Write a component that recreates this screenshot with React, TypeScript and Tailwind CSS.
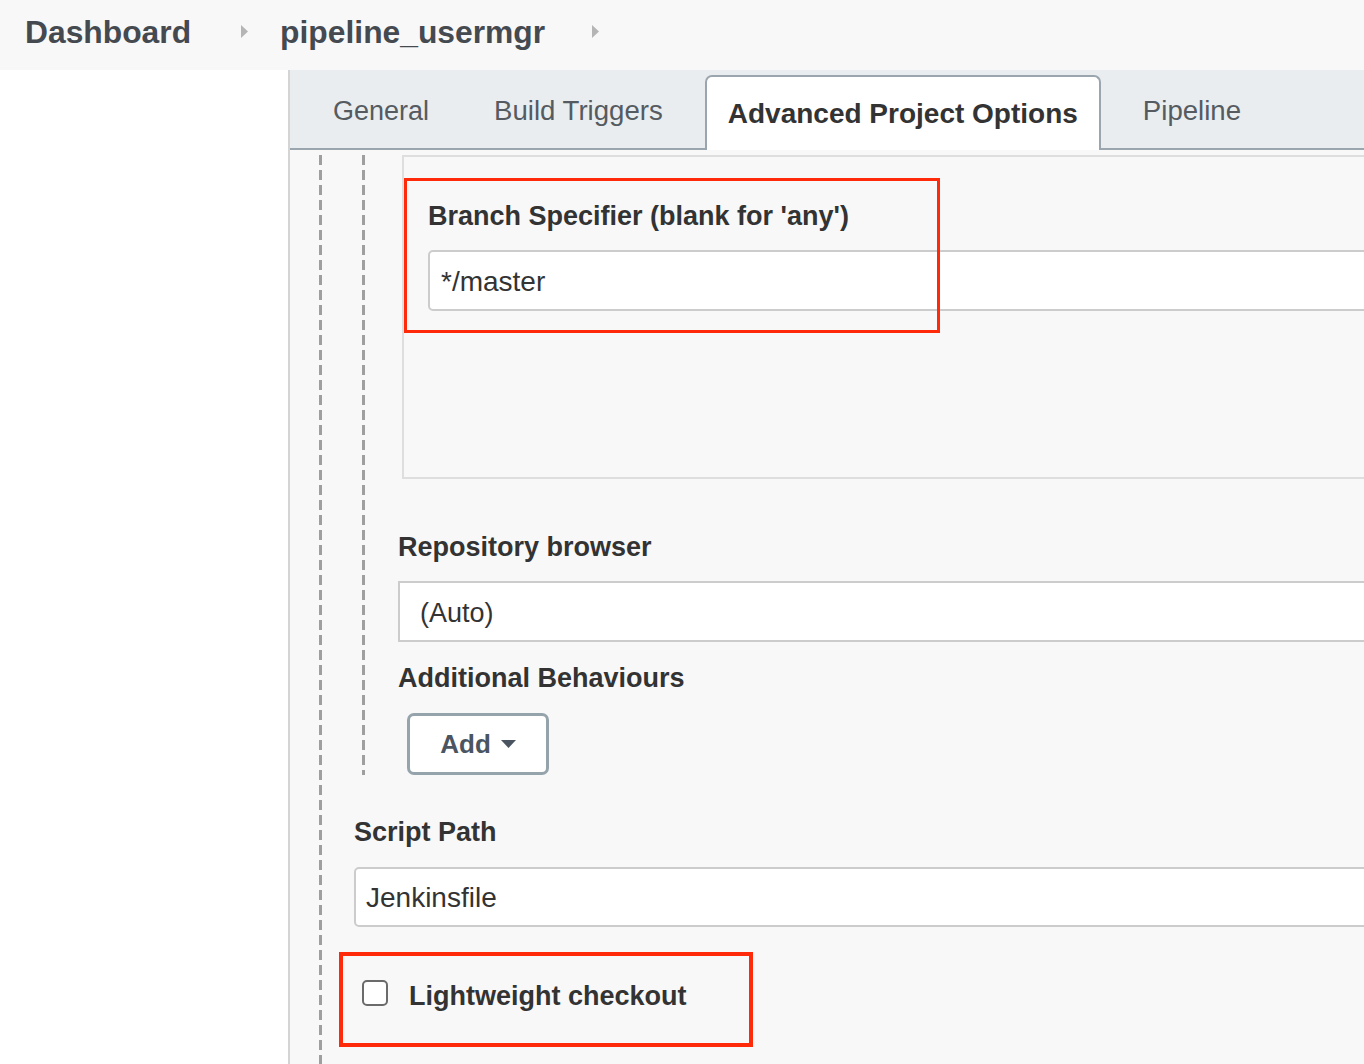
import React from "react";

const dashed =
  "w-[3px] self-stretch bg-[repeating-linear-gradient(to_bottom,#9f9f9f_0px,#9f9f9f_10px,transparent_10px,transparent_15px)]";

function Chevron() {
  return (
    <svg width="7" height="13" viewBox="0 0 7 13" className="shrink-0">
      <polygon points="0,0 7,6.5 0,13" fill="#b5b5b5" />
    </svg>
  );
}

const label = "pt-[2px] text-[27px] leading-[31px] font-bold text-[#333]";

export default function App() {
  return (
    <div className="w-[1364px] h-[1064px] overflow-hidden bg-[#f8f8f8] font-['Liberation_Sans',Arial,sans-serif] text-[#333]">
      {/* Breadcrumb */}
      <div className="h-[70px] flex items-center pb-[8px] bg-[#f8f8f8]">
        <span className="ml-[25px] pt-[1px] text-[31.8px] leading-[36px] font-bold text-[#454a50]">Dashboard</span>
        <span className="ml-[50px] flex items-center"><Chevron /></span>
        <span className="ml-[32px] pt-[1px] text-[31.8px] leading-[36px] font-bold text-[#454a50]">pipeline_usermgr</span>
        <span className="ml-[47px] flex items-center"><Chevron /></span>
      </div>

      <div className="flex h-[994px]">
        {/* Sidebar */}
        <div className="w-[290px] shrink-0 bg-white border-r-2 border-[#d4d4d4]" />

        {/* Main */}
        <div className="flex-1 flex flex-col overflow-hidden bg-[#f8f8f8]">
          {/* Tabs */}
          <div className="h-[80px] shrink-0 bg-[#e9edf0] border-b-2 border-[#9aa5ad] flex items-end">
            <div className="self-center ml-[43px] pt-[3px] text-[27px] leading-[32px] text-[#555b61]">General</div>
            <div className="self-center ml-[65px] pt-[3px] text-[27.6px] leading-[32px] text-[#555b61]">Build Triggers</div>
            <div className="ml-[42px] h-[75px] mb-[-2px] px-[21px] bg-white border-2 border-b-0 border-[#9aa5ad] rounded-t-[7px] flex items-center">
              <span className="text-[28px] leading-[32px] font-bold text-[#333]">Advanced Project Options</span>
            </div>
            <div className="self-center ml-[42px] pt-[3px] text-[27.6px] leading-[32px] text-[#555b61]">Pipeline</div>
          </div>

          {/* Content */}
          <div className="flex-1 flex pl-[29px] pt-[5px]">
            <div className={dashed} />
            <div className="ml-[32px] mr-[-60px] flex-1 flex flex-col">
              {/* nested git section */}
              <div className="flex ml-[8px]">
                <div className={dashed} />
                <div className="ml-[33px] flex-1 flex flex-col">
                  {/* Branch box */}
                  <div className="relative ml-[4px] h-[324px] border-2 border-[#dedede] pt-[42px] pl-[24px]">
                    <div className={label}>Branch Specifier (blank for 'any')</div>
                    <div className="mt-[18px] h-[61px] bg-white border-2 border-[#cccccc] rounded-[5px] pl-[11px] pt-[3px] flex items-center text-[28px] text-[#333]">
                      */master
                    </div>
                    <div className="absolute left-0 top-[21px] w-[536px] h-[155px] border-[3px] border-[#ff2a0a]" />
                  </div>

                  <div className={"mt-[51px] " + label}>Repository browser</div>
                  <div className="mt-[18px] h-[61px] bg-white border-2 border-[#cccccc] pl-[20px] pt-[3px] flex items-center text-[27px] text-[#333]">
                    (Auto)
                  </div>

                  <div className={"mt-[19px] " + label}>Additional Behaviours</div>
                  <div className="mt-[19px] ml-[9px] w-[142px] h-[62px] bg-white border-[3px] border-[#95a3ab] rounded-[7px] flex items-center justify-center gap-[10px]">
                    <span className="text-[26px] font-bold text-[#4b5561]">Add</span>
                    <svg width="15" height="8" viewBox="0 0 15 8">
                      <polygon points="0,0 15,0 7.5,8" fill="#4b5561" />
                    </svg>
                  </div>
                </div>
              </div>

              <div className={"mt-[40px] " + label}>Script Path</div>
              <div className="mt-[19px] h-[60px] bg-white border-2 border-[#cccccc] rounded-[5px] pl-[10px] pt-[1px] flex items-center text-[28px] text-[#333]">
                Jenkinsfile
              </div>

              <div className="relative mt-[53px] ml-[8px] flex items-start">
                <div className="w-[26px] h-[26px] bg-white border-2 border-[#6b6b6b] rounded-[5px]" />
                <span className="ml-[21px] mt-[1px] text-[27px] leading-[31px] font-bold text-[#333]">Lightweight checkout</span>
                <div className="absolute left-[-23px] top-[-28px] w-[414px] h-[95px] border-[4px] border-[#ff2a0a]" />
              </div>
            </div>
          </div>
        </div>
      </div>
    </div>
  );
}
